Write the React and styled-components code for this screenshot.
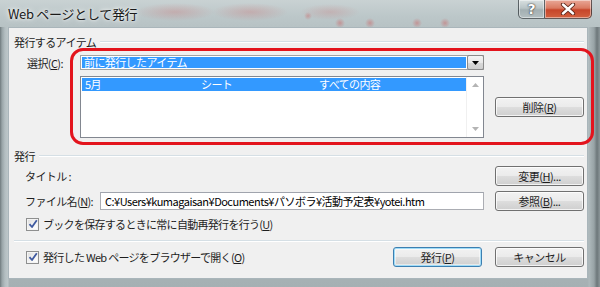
import React from 'react';
import styled, { createGlobalStyle } from 'styled-components';

const Global = createGlobalStyle`
  html, body { margin: 0; padding: 0; background: #ffffff; }
  body { font-family: "Noto Sans CJK JP", "Noto Sans", sans-serif; }
  * { box-sizing: border-box; }
`;

const Window = styled.div`
  position: relative;
  width: 600px;
  height: 287px;
  display: flex;
  flex-direction: column;
  overflow: hidden;
  background:
    linear-gradient(90deg, #6f7a7d 0, #98a4a7 2px, #b3bec1 5px, #bdc7c9 8px, rgba(0,0,0,0) 9px, rgba(0,0,0,0) 588px, #aeb9bc 589px, #98a3a6 594px, #6d777a 597px, #8c9699 600px),
    linear-gradient(180deg, #b9c4c6 0, #b3bec1 70%, #a5b0b3 100%);
`;

const TitleBar = styled.div`
  height: 27px;
  display: flex;
  align-items: flex-start;
  padding: 0 8px 0 8px;
  background:
    radial-gradient(ellipse 40px 9px at 175px 12px, rgba(205, 70, 70, 0.22), rgba(0,0,0,0) 100%),
    radial-gradient(ellipse 38px 9px at 250px 12px, rgba(205, 70, 70, 0.22), rgba(0,0,0,0) 100%),
    radial-gradient(ellipse 30px 8px at 330px 12px, rgba(205, 70, 70, 0.18), rgba(0,0,0,0) 100%),
    radial-gradient(circle 5px at 340px 23px, rgba(210, 60, 60, 0.35), rgba(0,0,0,0) 100%),
    radial-gradient(circle 5px at 370px 23px, rgba(210, 60, 60, 0.35), rgba(0,0,0,0) 100%),
    radial-gradient(circle 5px at 417px 23px, rgba(210, 60, 60, 0.35), rgba(0,0,0,0) 100%),
    radial-gradient(circle 5px at 445px 23px, rgba(210, 60, 60, 0.35), rgba(0,0,0,0) 100%),
    radial-gradient(circle 4px at 308px 16px, rgba(210, 60, 60, 0.3), rgba(0,0,0,0) 100%),
    linear-gradient(180deg, #c9d2d3 0, #bcc7c9 60%, #b7c2c4 100%);
`;

const TitleText = styled.div`
  margin-top: 5px;
  font-size: 13px;
  line-height: 17px;
  color: #1a1a1a;
  letter-spacing: -0.3px;
  text-shadow: 0 0 6px rgba(255,255,255,0.9), 0 0 3px rgba(255,255,255,0.9);
`;

const Caption = styled.div`
  margin-left: auto;
  display: flex;
`;

const CapButton = styled.div`
  height: 19px;
  width: ${p => p.$w}px;
  display: flex;
  align-items: center;
  justify-content: center;
  border: 1px solid rgba(55, 62, 66, 0.75);
  border-top: none;
  border-left: ${p => (p.$close ? 'none' : '1px solid rgba(55, 62, 66, 0.75)')};
  border-radius: ${p => (p.$close ? '0 0 5px 0' : '0 0 0 5px')};
  box-shadow: inset 0 0 0 1px rgba(255, 255, 255, 0.45);
  background: ${p =>
    p.$close
      ? 'linear-gradient(180deg, #e9a898 0, #da7a62 45%, #c7452a 55%, #d2613f 100%)'
      : 'linear-gradient(180deg, #d9e0e1 0, #b9c4c6 45%, #a3afb2 55%, #b4bfc1 100%)'};
`;

const HelpGlyph = styled.span`
  font-family: "DejaVu Sans", sans-serif;
  font-weight: bold;
  font-size: 14px;
  line-height: 14px;
  color: #ffffff;
  text-shadow: 0 0 2px #333, 0 0 1px #333;
`;

const Body = styled.div`
  flex: 1;
  display: flex;
  padding: 0 12px 8px 8px;
`;

const Client = styled.div`
  flex: 1;
  background: #f0f0f0;
  border: 1px solid #a9b5ba;
  display: flex;
  flex-direction: column;
  padding: 0 3px 0 5px;
  font-size: 11px;
  color: #1e1e1e;
`;

const GroupHeader = styled.div`
  display: flex;
  align-items: center;
  gap: 4px;
  height: 16px;
  margin-top: ${p => p.$mt}px;
  letter-spacing: -0.6px;
`;

const Rule = styled.div`
  flex: 1;
  height: 2px;
  border-top: 1px solid #d5dfe5;
  border-bottom: 1px solid #ffffff;
`;

const SelectGrid = styled.div`
  display: grid;
  grid-template-columns: 55px 404px 89px;
  grid-template-rows: 15px 62px;
  column-gap: 11px;
  row-gap: 6px;
  margin-top: 5px;
`;

const Label = styled.div`
  padding-left: ${p => p.$pl}px;
  align-self: center;
  white-space: nowrap;
  letter-spacing: -0.6px;
  line-height: 14px;
`;

const U = styled.span`
  text-decoration: underline;
  text-underline-offset: 1px;
`;

const Combo = styled.div`
  display: flex;
  border: 1px solid #a4a4a4;
  background: #ffffff;
  padding: 1px 0 1px 1px;
  height: 15px;
`;

const ComboValue = styled.div`
  flex: 1;
  background: #3399ff;
  color: #ffffff;
  font-size: 11px;
  line-height: 11px;
  padding-left: 2px;
  letter-spacing: -0.6px;
  white-space: nowrap;
`;

const DropButton = styled.div`
  width: 17px;
  margin: -2px -1px -2px 1px;
  border: 1px solid #8a8a8a;
  border-radius: 2px;
  background: linear-gradient(180deg, #f4f4f4 0, #e8e8e8 50%, #d8d8d8 51%, #cfcfcf 100%);
  display: flex;
  align-items: center;
  justify-content: center;
`;

const ListBox = styled.div`
  border: 1px solid #828790;
  background: #ffffff;
  display: flex;
  padding: 1px 0 0 1px;
`;

const ListRows = styled.div`
  flex: 1;
  display: flex;
  flex-direction: column;
`;

const ListRow = styled.div`
  display: grid;
  grid-template-columns: 116px 118px 1fr;
  height: 13px;
  line-height: 13px;
  padding-left: 3px;
  background: ${p => (p.$selected ? '#3399ff' : 'transparent')};
  color: ${p => (p.$selected ? '#ffffff' : '#000000')};
  letter-spacing: -0.6px;
  white-space: nowrap;
`;

const ScrollBar = styled.div`
  width: 17px;
  margin-top: -1px;
  background: #ffffff;
  border-left: 1px solid #f0f0f0;
  display: flex;
  flex-direction: column;
  justify-content: space-between;
  align-items: center;
  padding: 6px 0 6px;
`;

const Button = styled.div`
  height: ${p => p.$h || 20}px;
  border: 1px solid ${p => (p.$default ? '#3c7fb1' : '#707070')};
  border-radius: 3px;
  background: linear-gradient(180deg, #f2f2f2 0, #ebebeb 48%, #dddddd 52%, #cfcfcf 100%);
  box-shadow: ${p =>
    p.$default
      ? 'inset 0 0 0 1px #9fdcf8, inset 0 0 0 2px rgba(255,255,255,0.5)'
      : 'inset 0 0 0 1px rgba(255,255,255,0.75)'};
  display: flex;
  align-items: center;
  justify-content: center;
  font-size: 11px;
  color: #1e1e1e;
  letter-spacing: -0.5px;
  white-space: nowrap;
  align-self: ${p => p.$self || 'auto'};
  width: 89px;
`;

const FormGrid = styled.div`
  display: grid;
  grid-template-columns: 75px 384px 89px;
  column-gap: 11px;
  align-items: center;
  margin-top: ${p => p.$mt}px;
  height: ${p => p.$h}px;
`;

const TextInput = styled.div`
  height: 18px;
  border: 1px solid #abadb3;
  border-top-color: #a0a4ad;
  background: #ffffff;
  padding-left: 4px;
  line-height: 16px;
  font-size: 11px;
  letter-spacing: -0.5px;
  white-space: nowrap;
  overflow: hidden;
  color: #000;
`;

const CheckRow = styled.div`
  display: flex;
  align-items: center;
  gap: 4px;
  padding-left: 12px;
  height: 18px;
  margin-top: ${p => p.$mt || 0}px;
  letter-spacing: -0.7px;
  white-space: nowrap;
`;

const Box = styled.div`
  width: 13px;
  height: 13px;
  border: 1px solid #8e8f8f;
  background: linear-gradient(135deg, #dcdcdc 0, #f6f6f6 60%, #ffffff 100%);
  box-shadow: inset 0 0 0 1px #f4f4f4;
  display: flex;
  align-items: center;
  justify-content: center;
  flex: none;
`;

const Separator = styled.div`
  height: 2px;
  margin: 7px 0 0 0;
  border-top: 1px solid #d5dfe5;
  border-bottom: 1px solid #ffffff;
`;

const BottomRow = styled.div`
  display: flex;
  align-items: center;
  gap: 13px;
  margin-top: 5px;
  height: 20px;
`;

const Spacer = styled.div`
  flex: 1;
`;

const RedHighlight = styled.div`
  position: absolute;
  left: 70px;
  top: 48px;
  width: 524px;
  height: 97px;
  border: 3px solid #e3141d;
  border-radius: 13px;
  pointer-events: none;
`;

const Check = () => (
  <Box>
    <svg width="10" height="10" viewBox="0 0 10 10">
      <path d="M1.5 5.2 L4 8 L8.8 1.2" fill="none" stroke="#3f5aa0" strokeWidth="1.8" strokeLinejoin="round" />
    </svg>
  </Box>
);

export default function App() {
  return (
    <>
      <Global />
      <Window>
        <TitleBar>
          <TitleText>Web ページとして発行</TitleText>
          <Caption>
            <CapButton $w={27}>
              <HelpGlyph>?</HelpGlyph>
            </CapButton>
            <CapButton $w={47} $close>
              <svg width="16" height="12" viewBox="0 0 16 12">
                <path d="M3 1.5 L13 10.5 M13 1.5 L3 10.5" stroke="#5a2418" strokeWidth="4.2" strokeLinecap="round" />
                <path d="M3 1.5 L13 10.5 M13 1.5 L3 10.5" stroke="#ffffff" strokeWidth="2.4" strokeLinecap="round" />
              </svg>
            </CapButton>
          </Caption>
        </TitleBar>
        <Body>
          <Client>
            <GroupHeader $mt={6}>
              <span>発行するアイテム</span>
              <Rule />
            </GroupHeader>
            <SelectGrid>
              <Label $pl={13}>
                選択(<U>C</U>):
              </Label>
              <Combo>
                <ComboValue>前に発行したアイテム</ComboValue>
                <DropButton>
                  <svg width="7" height="4" viewBox="0 0 7 4">
                    <path d="M0 0 H7 L3.5 4 Z" fill="#000" />
                  </svg>
                </DropButton>
              </Combo>
              <div />
              <div />
              <ListBox>
                <ListRows>
                  <ListRow $selected>
                    <span>5月</span>
                    <span>シート</span>
                    <span>すべての内容</span>
                  </ListRow>
                </ListRows>
                <ScrollBar>
                  <svg width="7" height="4" viewBox="0 0 7 4">
                    <path d="M0 4 H7 L3.5 0 Z" fill="#b4b4b4" />
                  </svg>
                  <svg width="7" height="4" viewBox="0 0 7 4">
                    <path d="M0 0 H7 L3.5 4 Z" fill="#b4b4b4" />
                  </svg>
                </ScrollBar>
              </ListBox>
              <Button $self="center" $h={20}>
                削除(<U>R</U>)
              </Button>
            </SelectGrid>

            <GroupHeader $mt={10}>
              <span>発行</span>
              <Rule />
            </GroupHeader>

            <FormGrid $mt={2} $h={20}>
              <Label $pl={11}>タイトル :</Label>
              <div />
              <Button>
                変更(<U>H</U>)...
              </Button>
            </FormGrid>
            <FormGrid $mt={5} $h={20}>
              <Label $pl={11}>
                ファイル名(<U>N</U>):
              </Label>
              <TextInput>C:¥Users¥kumagaisan¥Documents¥パソボラ¥活動予定表¥yotei.htm</TextInput>
              <Button>
                参照(<U>B</U>)...
              </Button>
            </FormGrid>

            <CheckRow $mt={4}>
              <Check />
              <span>
                ブックを保存するときに常に自動再発行を行う(<U>U</U>)
              </span>
            </CheckRow>

            <Separator />

            <BottomRow>
              <CheckRow>
                <Check />
                <span>
                  発行した Web ページをブラウザーで開く(<U>O</U>)
                </span>
              </CheckRow>
              <Spacer />
              <Button $default>
                発行(<U>P</U>)
              </Button>
              <Button>キャンセル</Button>
            </BottomRow>
          </Client>
        </Body>
        <RedHighlight />
      </Window>
    </>
  );
}
